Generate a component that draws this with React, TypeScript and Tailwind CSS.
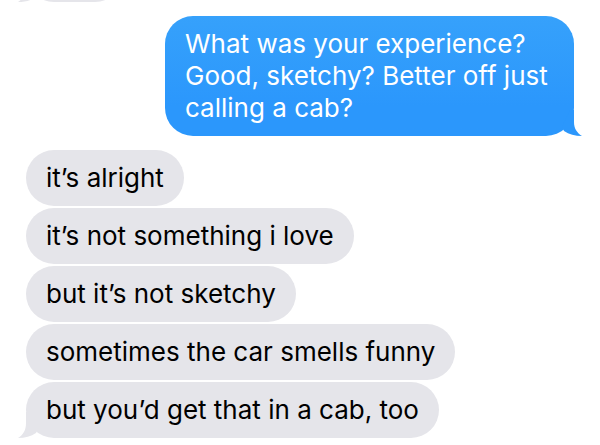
type Message = { text: string; tail?: boolean };

const replies: Message[] = [
  { text: "it’s alright" },
  { text: "it’s not something i love" },
  { text: "but it’s not sketchy" },
  { text: "sometimes the car smells funny" },
  { text: "but you’d get that in a cab, too", tail: true },
];

function LeftTail() {
  return (
    <svg
      aria-hidden="true"
      viewBox="0 0 24 26"
      className="absolute bottom-0 -left-2 h-[26px] w-6 fill-[#e5e5ea]"
    >
      <path d="M8 0V11C8 18 5.5 22.5 0 26C7 26 13 24.5 18 21L24 10V0Z" />
    </svg>
  );
}

function RightTail() {
  return (
    <svg
      aria-hidden="true"
      viewBox="0 0 24 26"
      className="absolute -right-2 bottom-0 h-[26px] w-6 fill-[#2b97fc]"
    >
      <path d="M16 0V12C16 18 18.5 22.5 24 26C17 26 11 24.5 6 21L4 17L12 0Z" />
    </svg>
  );
}

function Incoming({ text, tail }: Message) {
  return (
    <li className="relative rounded-[28px] bg-[#e5e5ea] px-5 py-3 text-black">
      {tail && <LeftTail />}
      <p className="relative">{text}</p>
    </li>
  );
}

export default function App() {
  return (
    <main className="overflow-hidden bg-white px-[26px] pb-2 font-['Inter','Liberation_Sans',sans-serif] text-[26px] leading-8">
      <div className="relative -mt-[54px] h-14 w-[97px] rounded-[28px] bg-[#e5e5ea]">
        <LeftTail />
      </div>
      <div className="relative mt-3.5 ml-auto w-fit max-w-[409px] rounded-[28px] bg-linear-to-b from-[#36a1fb] to-[#2b97fc] to-75% px-5 py-3 text-white">
        <RightTail />
        <p className="relative">What was your experience? Good, sketchy? Better off just calling a cab?</p>
      </div>
      <ul className="mt-3.5 flex flex-col items-start gap-0.5">
        {replies.map((m) => (
          <Incoming key={m.text} text={m.text} tail={m.tail} />
        ))}
      </ul>
    </main>
  );
}
